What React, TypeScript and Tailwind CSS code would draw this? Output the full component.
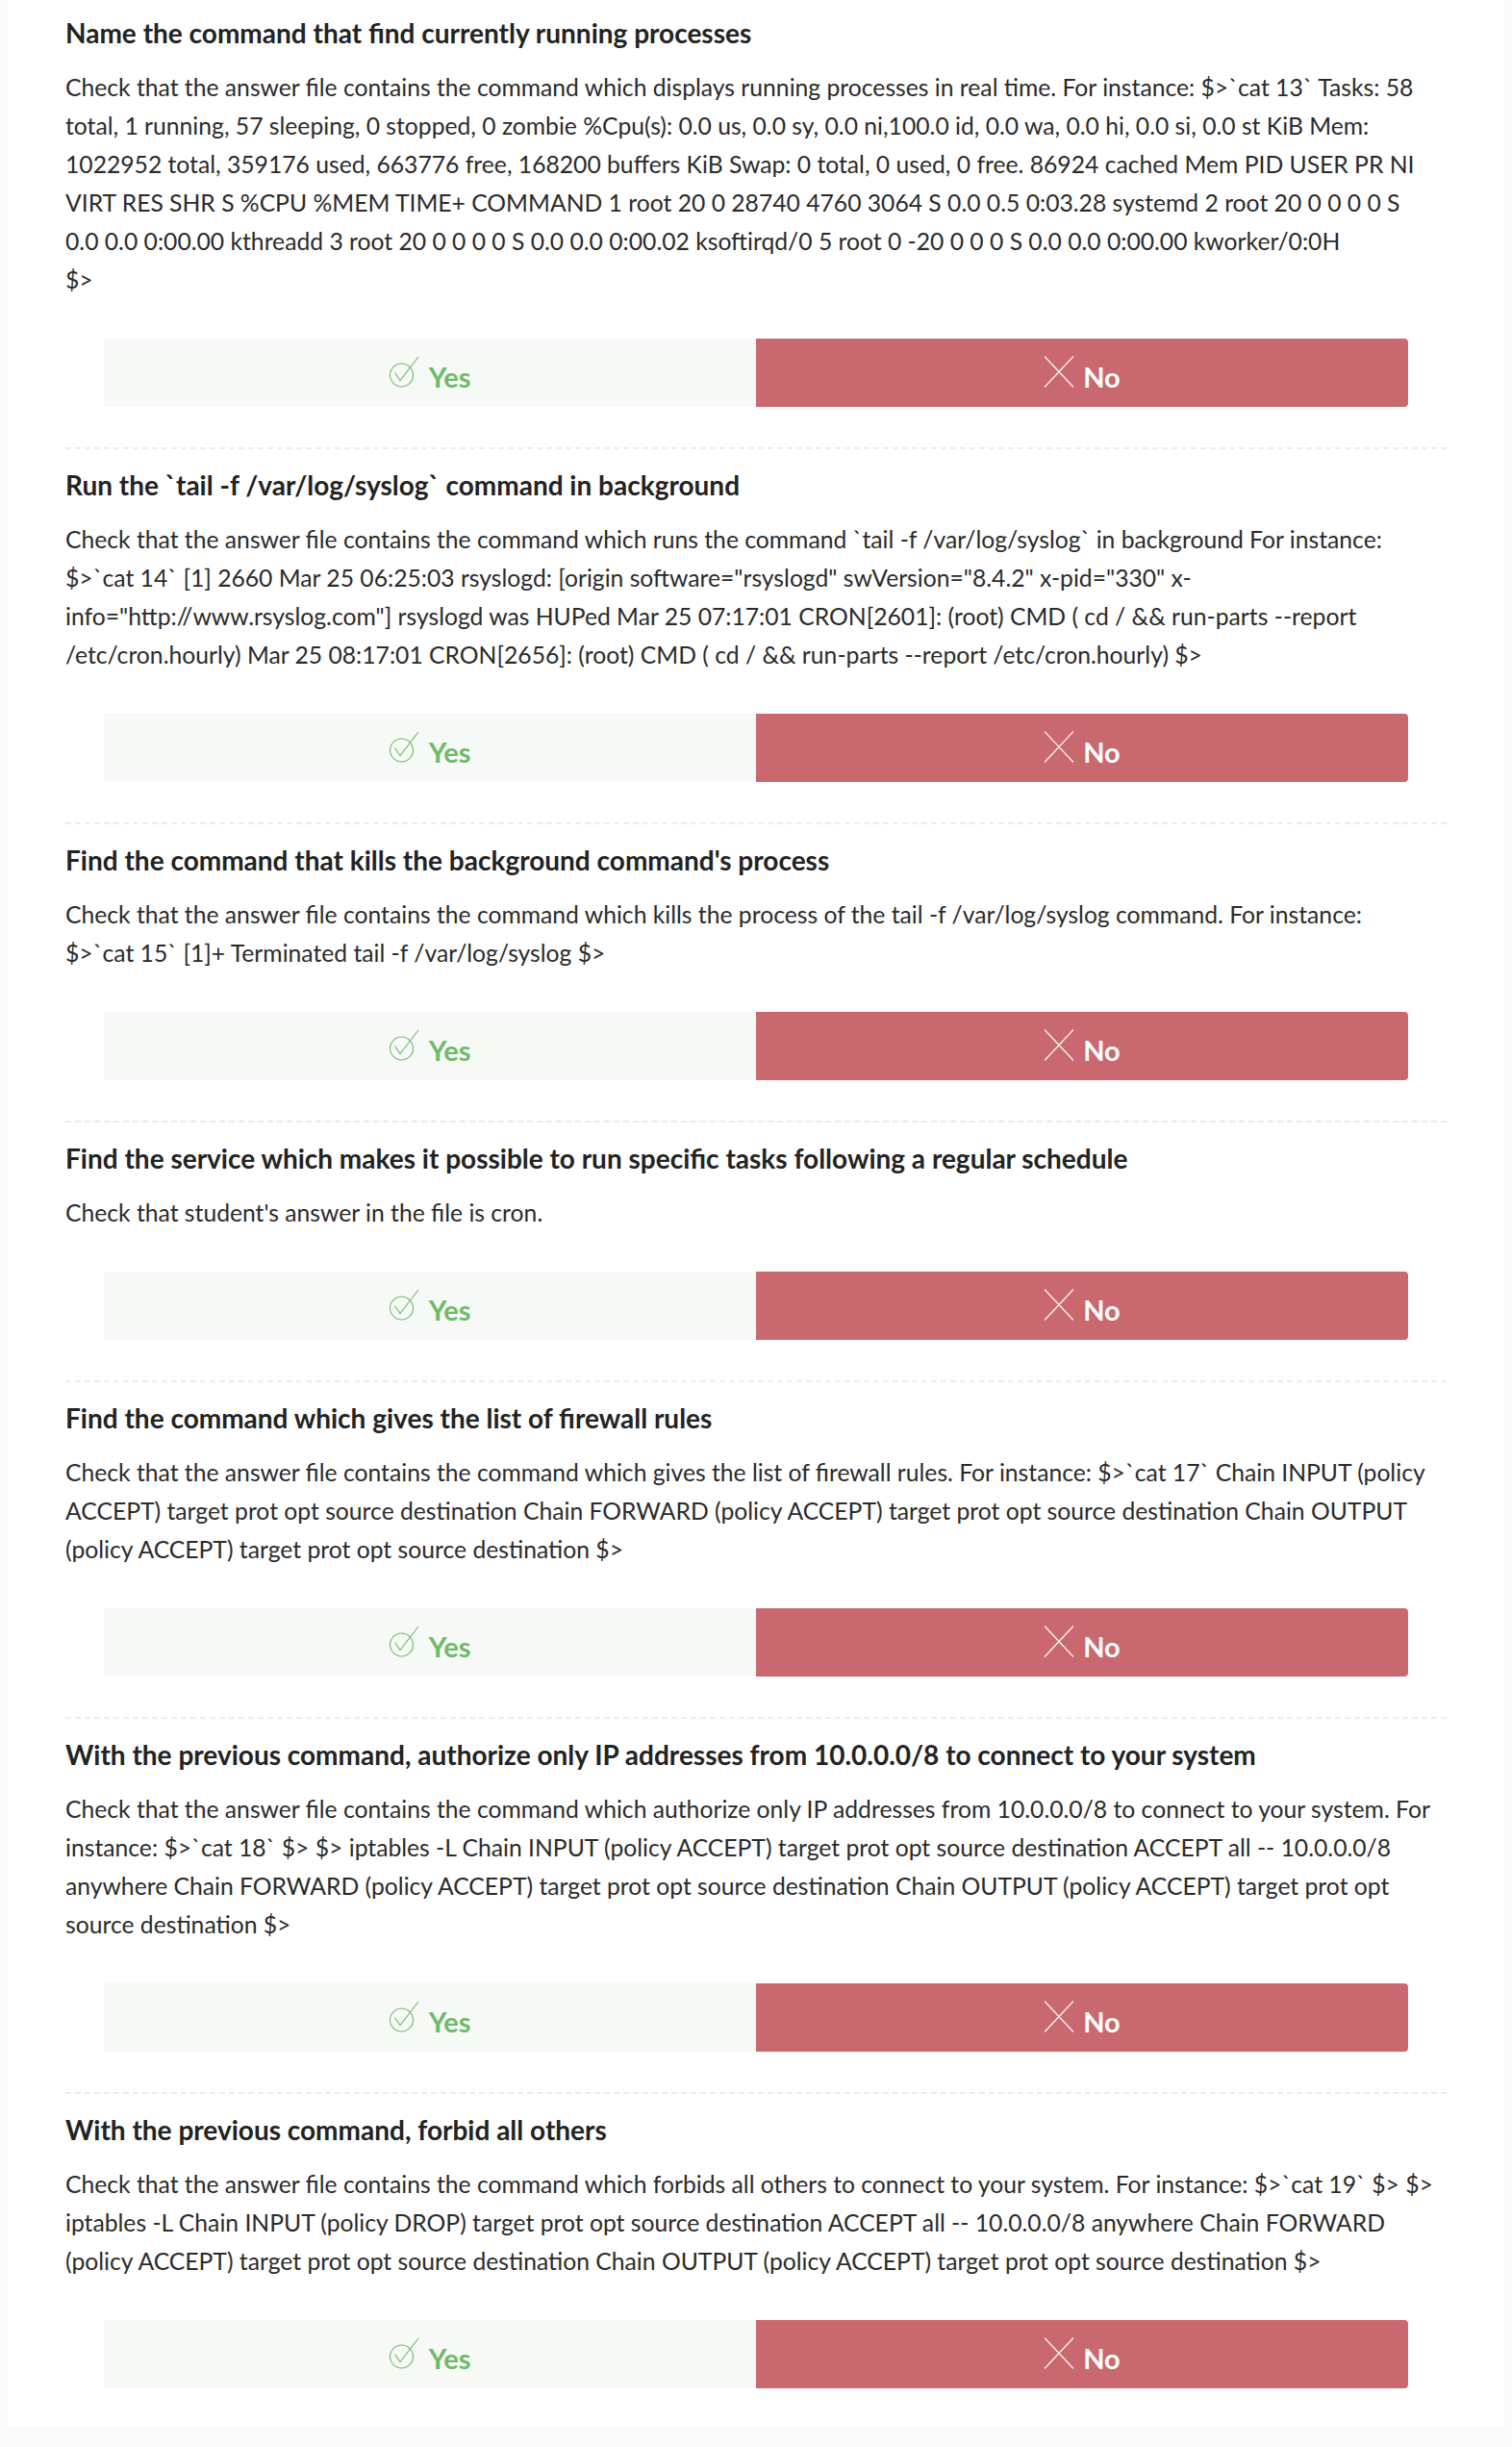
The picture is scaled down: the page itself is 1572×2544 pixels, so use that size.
const checks = [
  {
    title: "Name the command that find currently running processes",
    lines: [
      "Check that the answer file contains the command which displays running processes in real time. For instance: $>`cat 13` Tasks: 58",
      "total, 1 running, 57 sleeping, 0 stopped, 0 zombie %Cpu(s): 0.0 us, 0.0 sy, 0.0 ni,100.0 id, 0.0 wa, 0.0 hi, 0.0 si, 0.0 st KiB Mem:",
      "1022952 total, 359176 used, 663776 free, 168200 buffers KiB Swap: 0 total, 0 used, 0 free. 86924 cached Mem PID USER PR NI",
      "VIRT RES SHR S %CPU %MEM TIME+ COMMAND 1 root 20 0 28740 4760 3064 S 0.0 0.5 0:03.28 systemd 2 root 20 0 0 0 0 S",
      "0.0 0.0 0:00.00 kthreadd 3 root 20 0 0 0 0 S 0.0 0.0 0:00.02 ksoftirqd/0 5 root 0 -20 0 0 0 S 0.0 0.0 0:00.00 kworker/0:0H",
      "$>",
    ],
  },
  {
    title: "Run the `tail -f /var/log/syslog` command in background",
    lines: [
      "Check that the answer file contains the command which runs the command `tail -f /var/log/syslog` in background For instance:",
      '$>`cat 14` [1] 2660 Mar 25 06:25:03 rsyslogd: [origin software="rsyslogd" swVersion="8.4.2" x-pid="330" x-',
      'info="http://www.rsyslog.com"] rsyslogd was HUPed Mar 25 07:17:01 CRON[2601]: (root) CMD ( cd / && run-parts --report',
      "/etc/cron.hourly) Mar 25 08:17:01 CRON[2656]: (root) CMD ( cd / && run-parts --report /etc/cron.hourly) $>",
    ],
  },
  {
    title: "Find the command that kills the background command's process",
    lines: [
      "Check that the answer file contains the command which kills the process of the tail -f /var/log/syslog command. For instance:",
      "$>`cat 15` [1]+ Terminated tail -f /var/log/syslog $>",
    ],
  },
  {
    title: "Find the service which makes it possible to run specific tasks following a regular schedule",
    lines: ["Check that student's answer in the file is cron."],
  },
  {
    title: "Find the command which gives the list of firewall rules",
    lines: [
      "Check that the answer file contains the command which gives the list of firewall rules. For instance: $>`cat 17` Chain INPUT (policy",
      "ACCEPT) target prot opt source destination Chain FORWARD (policy ACCEPT) target prot opt source destination Chain OUTPUT",
      "(policy ACCEPT) target prot opt source destination $>",
    ],
  },
  {
    title: "With the previous command, authorize only IP addresses from 10.0.0.0/8 to connect to your system",
    lines: [
      "Check that the answer file contains the command which authorize only IP addresses from 10.0.0.0/8 to connect to your system. For",
      "instance: $>`cat 18` $> $> iptables -L Chain INPUT (policy ACCEPT) target prot opt source destination ACCEPT all -- 10.0.0.0/8",
      "anywhere Chain FORWARD (policy ACCEPT) target prot opt source destination Chain OUTPUT (policy ACCEPT) target prot opt",
      "source destination $>",
    ],
  },
  {
    title: "With the previous command, forbid all others",
    lines: [
      "Check that the answer file contains the command which forbids all others to connect to your system. For instance: $>`cat 19` $> $>",
      "iptables -L Chain INPUT (policy DROP) target prot opt source destination ACCEPT all -- 10.0.0.0/8 anywhere Chain FORWARD",
      "(policy ACCEPT) target prot opt source destination Chain OUTPUT (policy ACCEPT) target prot opt source destination $>",
    ],
  },
];

const CheckIcon = () => (
  <svg width="32" height="33" viewBox="0 0 32 33" fill="none" stroke="#6dbb6b" strokeWidth="1.1">
    <circle cx="12.5" cy="20" r="12" />
    <path d="M5.5 17.5 L11 25.5 L30 1" />
  </svg>
);

const CrossIcon = () => (
  <svg width="32" height="33" viewBox="0 0 32 33" fill="none" stroke="#ffffff" strokeWidth="1.1">
    <path d="M1 0.5 L31 32.5 M31 0.5 L1 32.5" />
  </svg>
);

const App = () => {
  return (
    <div className="min-h-screen bg-[#f9f9f9] px-2 font-['Lato',sans-serif] text-[#2b2b2b]">
      <div className="bg-white px-[60px] pt-[14px] pb-[40px]">
        {checks.map((c, i) => (
          <div key={i} className={i === 0 ? "" : "pt-[17px]"}>
            {/* Question */}
            <h2 className="text-[28px] font-bold leading-[40px] whitespace-nowrap text-[#232323]">{c.title}</h2>
            <div className="mt-[17px] text-[24.7px] leading-[40px]">
              {c.lines.map((l, j) => (
                <div key={j} className="whitespace-nowrap">
                  {l}
                </div>
              ))}
            </div>

            {/* Yes / No buttons */}
            <div className="mt-[41px] mx-10 flex h-[71px]">
              <button className="flex-1 flex items-center justify-center bg-[#f7f9f6]">
                <span className="flex items-baseline gap-[9px] text-[29px] font-bold text-[#6dbb6b] leading-none">
                  <CheckIcon />
                  Yes
                </span>
              </button>
              <button className="flex-1 flex items-center justify-center bg-[#c9696f] rounded-r-sm">
                <span className="flex items-baseline gap-[9px] text-[29px] font-bold text-white leading-none">
                  <CrossIcon />
                  No
                </span>
              </button>
            </div>

            {i < checks.length - 1 && (
              <div className="mt-[42px] h-[2px] bg-[linear-gradient(to_right,#ececec_65%,transparent_65%)] bg-[length:10px_2px] bg-repeat-x" />
            )}
          </div>
        ))}
      </div>
    </div>
  );
};

export default App;
